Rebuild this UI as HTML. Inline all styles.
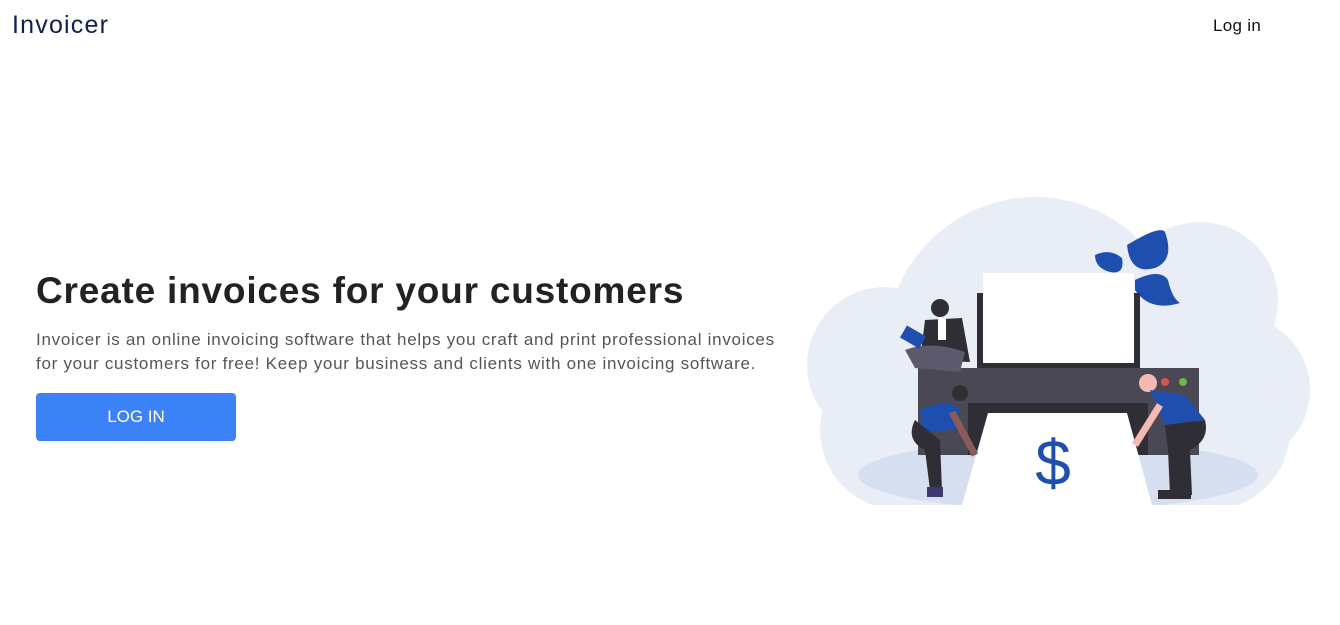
<!DOCTYPE html>
<html><head><meta charset="utf-8"><style>
*{margin:0;padding:0;box-sizing:border-box}
body{width:1340px;height:625px;background:#fff;font-family:"Liberation Sans",sans-serif;position:relative;overflow:hidden}
.logo{position:absolute;left:12px;top:11px;font-size:25px;color:#0f1f4f;letter-spacing:1.2px}
.login{position:absolute;left:1213px;top:16px;font-size:17px;color:#111;letter-spacing:0.3px}
h1{position:absolute;left:36px;top:270px;font-size:37px;font-weight:bold;color:#222;letter-spacing:0.8px;white-space:nowrap}
p{position:absolute;left:36px;top:328px;font-size:17px;line-height:24px;color:#555;white-space:nowrap;letter-spacing:0.72px}
.btn{position:absolute;left:36px;top:393px;width:200px;height:48px;background:#3b82f6;border-radius:4px;color:#fff;font-size:17px;text-align:center;line-height:48px}
svg{position:absolute;left:0;top:0}
</style></head><body>
<div class="logo">Invoicer</div>
<div class="login">Log in</div>
<h1>Create invoices for your customers</h1>
<p>Invoicer is an online invoicing software that helps you craft and print professional invoices<br>for your customers for free! Keep your business and clients with one invoicing software.</p>
<div class="btn">LOG IN</div>
<svg width="1340" height="625">
<defs><clipPath id="c"><rect x="790" y="180" width="540" height="325"/></clipPath></defs>
<g clip-path="url(#c)" fill="#e9edf6">
<ellipse cx="1035" cy="350" rx="150" ry="153"/>
<circle cx="885" cy="365" r="78"/>
<circle cx="1200" cy="300" r="78"/>
<circle cx="1235" cy="390" r="75"/>
<circle cx="900" cy="430" r="80"/>
<circle cx="1210" cy="430" r="80"/>
<rect x="880" y="380" width="350" height="125"/>
<ellipse cx="1058" cy="475" rx="200" ry="35" fill="#d6dff0"/>
</g>
<g fill="#1e4fae">
<path d="M1127 245 Q1160 225 1165 232 Q1175 260 1155 268 Q1130 275 1127 245Z"/>
<path d="M1095 255 Q1110 248 1122 258 Q1125 275 1110 272 Q1095 268 1095 255Z"/>
<path d="M1135 280 Q1160 268 1168 280 Q1172 298 1180 303 Q1150 312 1135 290Z"/>
</g>
<rect x="977" y="293" width="163" height="75" fill="#2f2e35"/>
<rect x="983" y="273" width="151" height="90" fill="#fff"/>
<rect x="918" y="368" width="281" height="87" fill="#4a4855"/>
<rect x="968" y="403" width="180" height="12" fill="#2f2e35"/>
<rect x="968" y="410" width="20" height="45" fill="#2f2e35"/>
<rect x="1128" y="410" width="20" height="45" fill="#2f2e35"/>
<polygon points="988,413 1127,413 1152,505 962,505" fill="#fff"/>
<circle cx="1165" cy="382" r="4" fill="#d9534f"/>
<circle cx="1183" cy="382" r="4" fill="#6bb84a"/>
<text x="1053" y="485" font-size="64" fill="#1e4fae" text-anchor="middle" font-family="Liberation Sans">$</text>
<circle cx="940" cy="308" r="9" fill="#2f2e35"/>
<path d="M925 320 L962 318 L970 362 L920 360Z" fill="#2f2e35"/>
<rect x="938" y="318" width="8" height="22" fill="#fff"/>
<path d="M905 350 Q930 340 965 352 L960 372 L915 368Z" fill="#5d5a6d"/>
<rect x="902" y="330" width="22" height="14" fill="#1e4fae" transform="rotate(30 913 337)"/>
<circle cx="960" cy="393" r="8" fill="#2f2e35"/>
<path d="M920 410 Q945 398 960 408 L955 430 L922 432Z" fill="#1e4fae"/>
<path d="M952 412 L975 455" stroke="#8b5a5a" stroke-width="7"/>
<path d="M915 420 Q905 440 925 450 L930 490 L942 490 L940 440Z" fill="#2f2e35"/>
<rect x="927" y="487" width="16" height="10" fill="#3c3a6e"/>
<circle cx="1148" cy="383" r="9" fill="#f4b9b2"/>
<path d="M1150 390 L1185 395 L1205 420 L1165 425Z" fill="#1e4fae"/>
<path d="M1160 405 L1135 445" stroke="#f4b9b2" stroke-width="7"/>
<path d="M1165 425 L1205 420 Q1210 440 1190 450 L1192 495 L1170 495 L1168 450Z" fill="#2f2e35"/>
<rect x="1158" y="490" width="33" height="9" fill="#2f2e35"/>
</svg>
</body></html>
